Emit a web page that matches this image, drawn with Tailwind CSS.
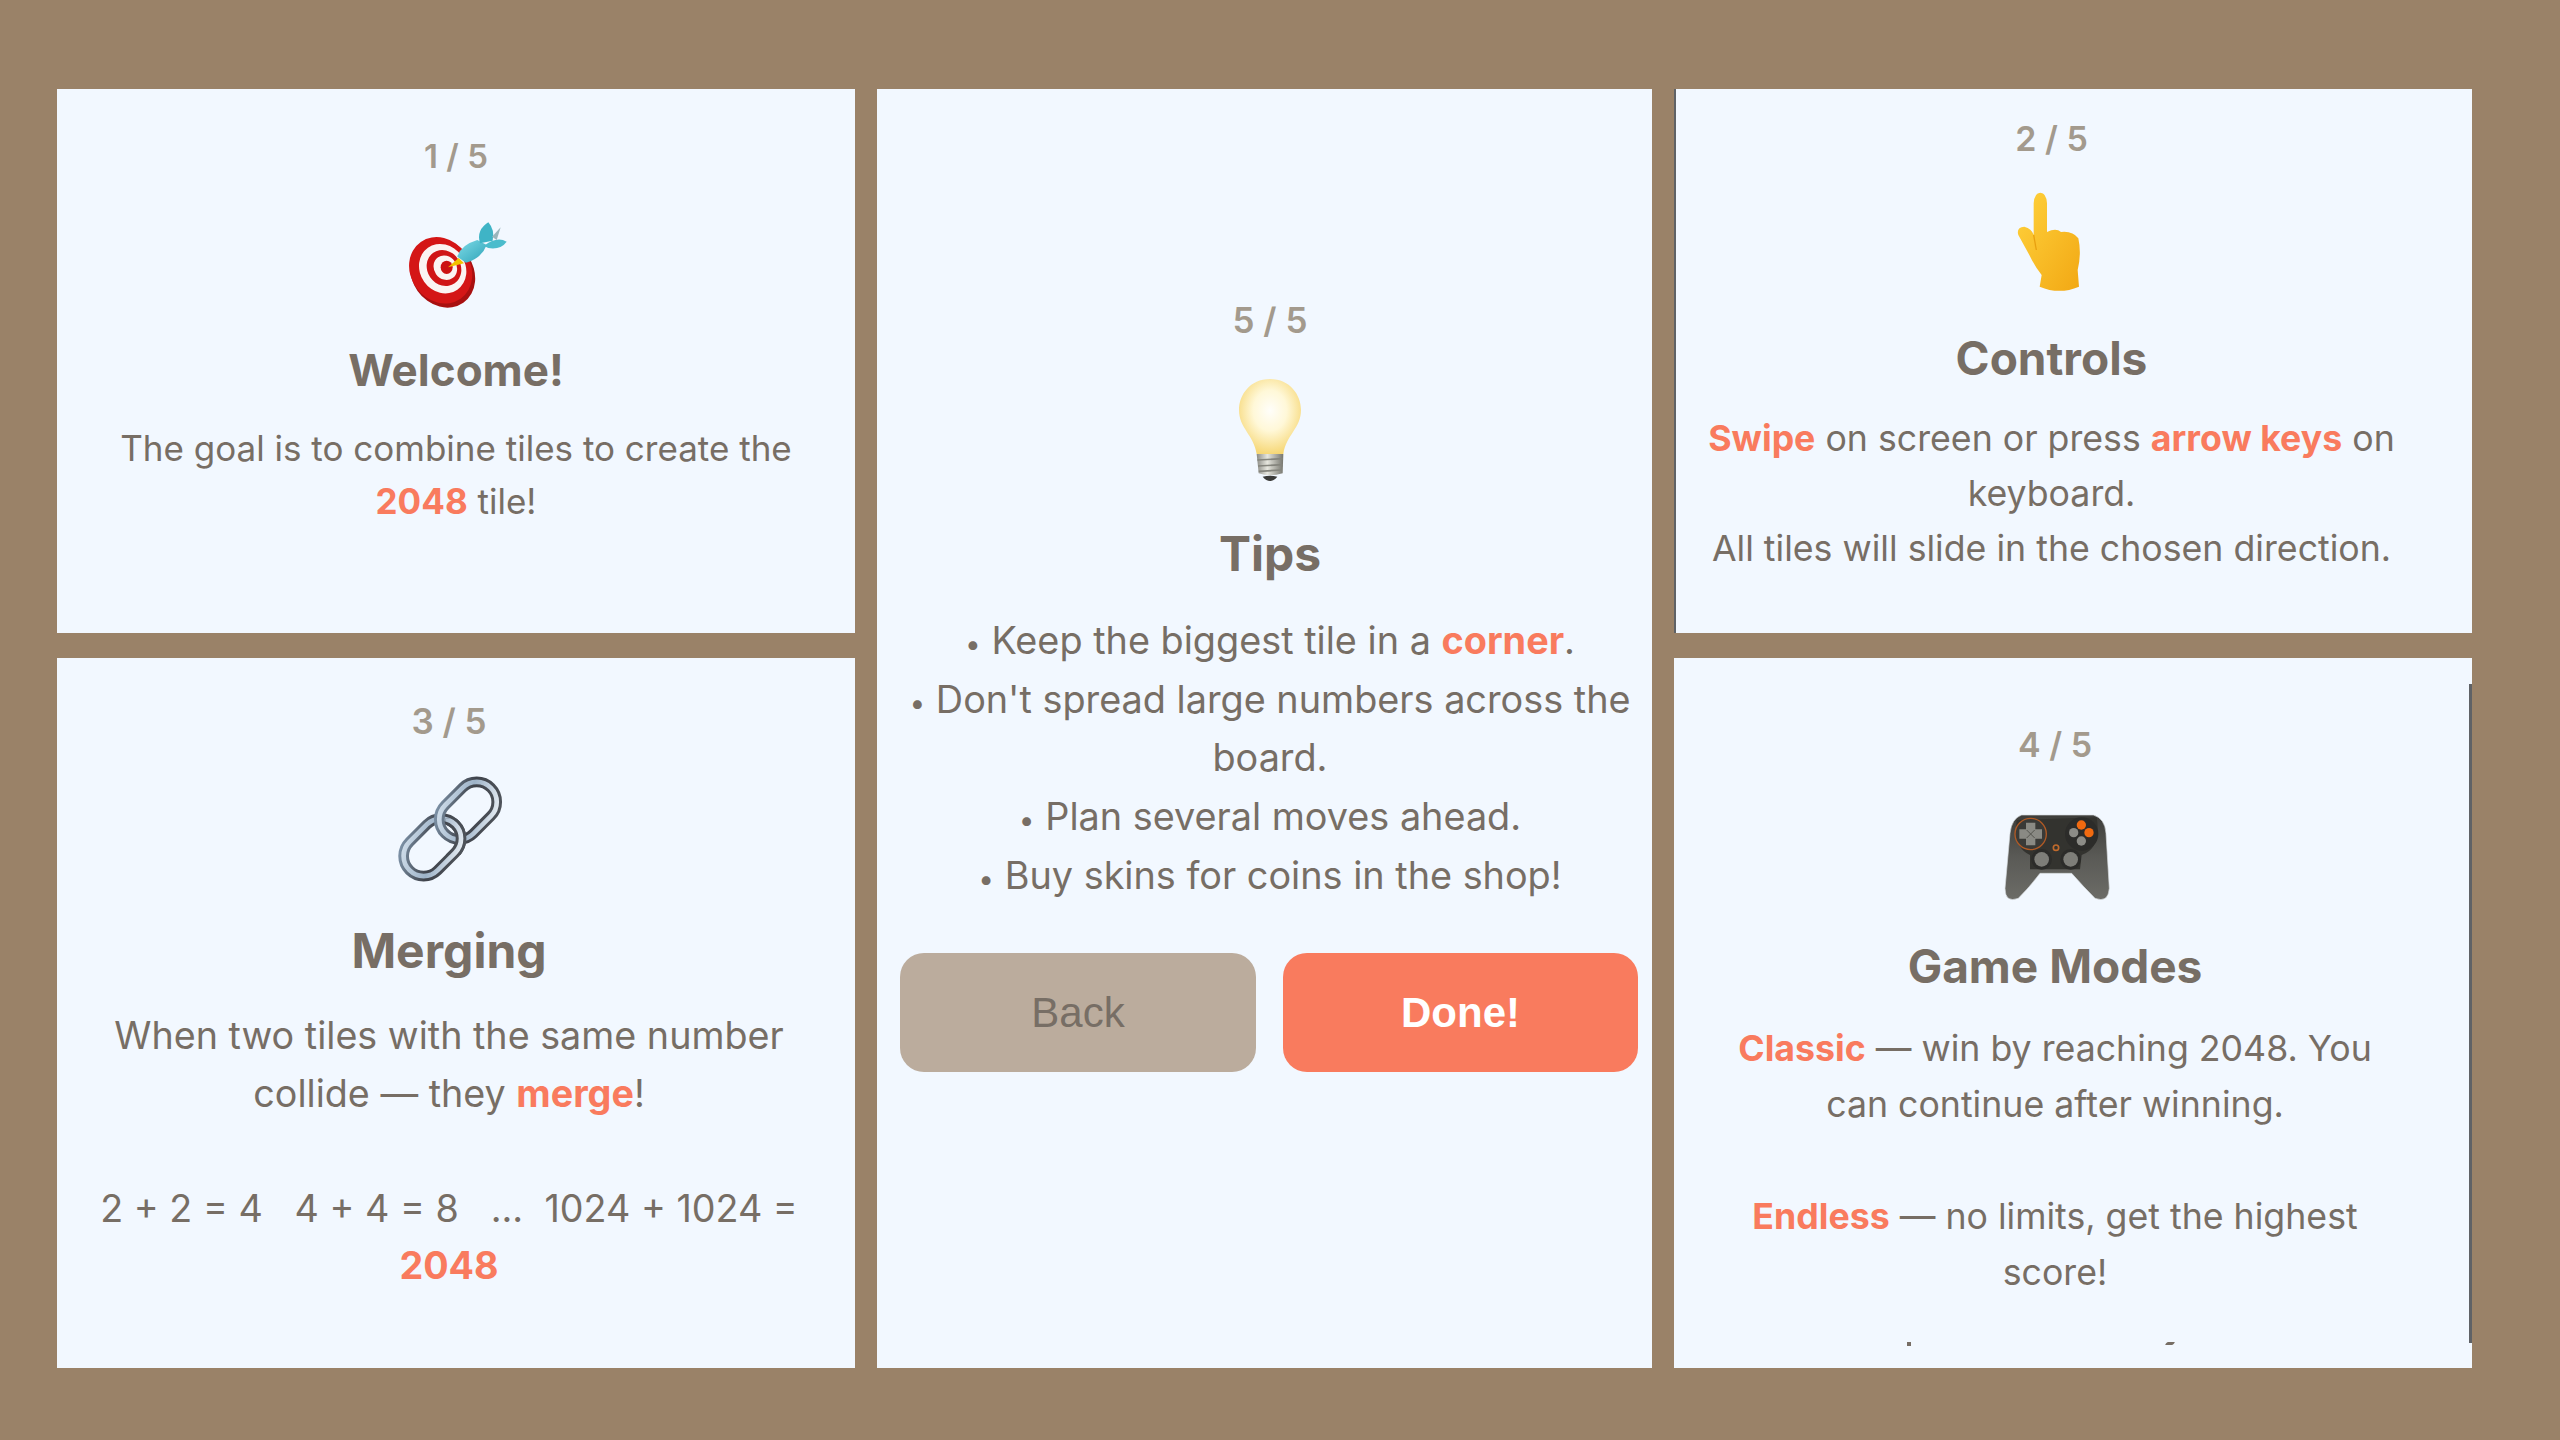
<!DOCTYPE html>
<html><head><meta charset="utf-8"><script src="https://cdn.jsdelivr.net/npm/@tailwindcss/browser@4"></script></head>
<body class="m-0 bg-[#9a8268]">
<div class="relative w-[2560px] h-[1440px] bg-[#9a8268] pt-[89px] pl-[57px] flex gap-[22px] font-['Inter',sans-serif] text-[#776e65] text-center overflow-hidden">
  <div class="w-[798px] flex flex-col gap-[25px]">
    <section class="h-[544px] bg-[#f2f8ff] pt-[47px]">
      <div class="h-[40px] leading-[40px] text-[33px] font-semibold text-[#a39a8d]">1 / 5</div>
      <svg class="block mx-auto mt-[14px] w-[200px] h-[150px]" viewBox="48 0 600 450">
        <defs><linearGradient id="dt" x1="0" y1="0" x2="1" y2="1"><stop offset="0" stop-color="#7fdce8"/><stop offset="1" stop-color="#2ea3b8"/></linearGradient></defs>
        <ellipse cx="308" cy="250" rx="92" ry="108" transform="rotate(-35 308 250)" fill="#a81010"/>
        <ellipse cx="302" cy="241" rx="90" ry="104" transform="rotate(-35 302 241)" fill="#d41616"/>
        <ellipse cx="308" cy="236" rx="68" ry="77" transform="rotate(-35 308 236)" fill="#fbf4f2"/>
        <ellipse cx="312" cy="234" rx="50" ry="56" transform="rotate(-35 312 234)" fill="#d01515"/>
        <ellipse cx="316" cy="233" rx="34" ry="38" transform="rotate(-35 316 233)" fill="#fbf4f2"/>
        <ellipse cx="320" cy="232" rx="18" ry="20" fill="#cc1212"/>
        <path d="M324 232 L356 204 L372 220Z" fill="#f2c200"/>
        <path d="M352 200 Q362 165 412 150 L440 165 Q425 205 378 218Z" fill="url(#dt)"/>
        <path d="M420 160 Q408 120 445 97 Q465 120 458 152Z" fill="#3fb4c6"/>
        <path d="M432 168 Q470 138 500 155 Q482 180 445 174Z" fill="#4bbccc"/>
        <path d="M456 140 L482 112 L470 150Z" fill="#9ab6bc"/>
      </svg>
      <h2 class="mt-[5px] h-[50px] leading-[50px] text-[44px] font-bold">Welcome!</h2>
      <p class="mt-[27px] text-[35px] leading-[53px]">The goal is to combine tiles to create the<br><b class="font-bold text-[#f97b5e]">2048</b> tile!</p>
    </section>
    <section class="h-[710px] bg-[#f2f8ff] pt-[43px] pr-[14px]">
      <div class="h-[40px] leading-[40px] text-[35px] font-semibold text-[#a39a8d]">3 / 5</div>
      <svg class="block mx-auto mt-[9px] w-[170px] h-[150px]" viewBox="-20 0 510 450" fill="none">
        <defs>
          <linearGradient id="cd" x1="0" y1="0" x2="1" y2="1"><stop offset="0" stop-color="#8197ad"/><stop offset=".5" stop-color="#3f434b"/><stop offset="1" stop-color="#50555c"/></linearGradient>
          <linearGradient id="cl" x1="0" y1="0" x2="1" y2="1"><stop offset="0" stop-color="#d5e2ee"/><stop offset=".5" stop-color="#9db2c7"/><stop offset="1" stop-color="#eef3f8"/></linearGradient>
          <clipPath id="over"><rect x="225" y="205" width="90" height="110"/></clipPath>
          <g id="lowerlink"><rect x="88" y="232" width="194" height="120" rx="60" transform="rotate(-45 185 292)" stroke="url(#cd)" stroke-width="32"/><rect x="88" y="232" width="194" height="120" rx="60" transform="rotate(-45 185 292)" stroke="url(#cl)" stroke-width="14"/></g>
        </defs>
        <use href="#lowerlink"/>
        <rect x="195" y="122" width="194" height="120" rx="60" transform="rotate(-45 292 182)" stroke="url(#cd)" stroke-width="32"/>
        <rect x="195" y="122" width="194" height="120" rx="60" transform="rotate(-45 292 182)" stroke="url(#cl)" stroke-width="14"/>
        <g clip-path="url(#over)"><use href="#lowerlink"/></g>
      </svg>
      <h2 class="mt-[26px] h-[50px] leading-[50px] text-[48px] font-bold">Merging</h2>
      <p class="mt-[31px] text-[37.7px] leading-[57.5px]">When two tiles with the same number<br>collide — they <b class="font-bold text-[#f97b5e]">merge</b>!<br><br>2 + 2 = 4 &nbsp; 4 + 4 = 8 &nbsp; ... &nbsp;1024 + 1024 =<br><b class="font-bold text-[#f97b5e]">2048</b></p>
    </section>
  </div>
  <section class="w-[775px] h-[1279px] bg-[#f2f8ff] pt-[211px] pl-[11px]">
    <div class="h-[40px] leading-[40px] text-[35px] font-semibold text-[#a39a8d]">5 / 5</div>
    <svg class="block mx-auto mt-[20px] w-[180px] h-[140px]" viewBox="0 0 540 420">
      <defs><radialGradient id="bl" cx=".5" cy=".42" r=".6"><stop offset="0" stop-color="#fffefa"/><stop offset=".45" stop-color="#fff8d8"/><stop offset="1" stop-color="#f6d672"/></radialGradient>
      <linearGradient id="sc" x1="0" x2="1"><stop offset="0" stop-color="#8c8c86"/><stop offset=".4" stop-color="#e6e6de"/><stop offset="1" stop-color="#77776f"/></linearGradient></defs>
      <path d="M270 57 C210 57 177 105 177 150 C177 205 222 225 230 282 L310 282 C318 225 363 205 363 150 C363 105 330 57 270 57Z" fill="url(#bl)"/>
      <path d="M230 282 L310 282 L308 340 Q270 352 236 340Z" fill="url(#sc)"/>
      <path d="M232 300 L308 296 M234 318 L308 314 M236 334 L306 330" stroke="#85857d" stroke-width="5"/>
      <path d="M248 350 Q270 376 292 350 Q270 344 248 350Z" fill="#3b3b39"/>
    </svg>
    <h2 class="mt-[29px] h-[50px] leading-[50px] text-[48px] font-bold">Tips</h2>
    <p class="mt-[32px] text-[37.8px] leading-[58.7px]"><span class="text-[28px] leading-none">•</span> Keep the biggest tile in a <b class="font-bold text-[#f97b5e]">corner</b>.<br><span class="text-[28px] leading-none">•</span> Don't spread large numbers across the<br>board.<br><span class="text-[28px] leading-none">•</span> Plan several moves ahead.<br><span class="text-[28px] leading-none">•</span> Buy skins for coins in the shop!</p>
  </section>
  <div class="w-[798px] flex flex-col gap-[25px]">
    <section class="h-[544px] bg-[#f2f8ff] pt-[30px] pr-[43px]">
      <div class="h-[40px] leading-[40px] text-[34px] font-semibold text-[#a39a8d]">2 / 5</div>
      <svg class="block mx-auto mt-[11px] w-[180px] h-[150px]" viewBox="3 0 540 450">
        <defs><linearGradient id="hd" x1="0" y1="0" x2="1" y2="1"><stop offset="0" stop-color="#ffd23c"/><stop offset="1" stop-color="#f2a814"/></linearGradient></defs>
        <path d="M218 100 Q220 68 238 68 Q256 68 258 100 L258 186 Q285 172 300 186 Q335 182 352 205 Q362 250 350 300 L354 350 Q295 375 236 350 L242 315 Q222 290 205 255 L172 195 Q165 172 190 170 Q212 175 218 195Z" fill="url(#hd)"/>
        <path d="M218 195 L226 240" stroke="#e8a010" stroke-width="4" fill="none"/>
      </svg>
      <h2 class="mt-[13px] h-[50px] leading-[50px] text-[46px] font-bold">Controls</h2>
      <p class="mt-[28px] text-[35.7px] leading-[55px]"><b class="font-bold text-[#f97b5e]">Swipe</b> on screen or press <b class="font-bold text-[#f97b5e]">arrow keys</b> on<br>keyboard.<br>All tiles will slide in the chosen direction.</p>
    </section>
    <section class="relative h-[710px] bg-[#f2f8ff]">
      <div class="h-[685px] overflow-hidden pt-[67px] pr-[36px]">
        <div class="h-[40px] leading-[40px] text-[34px] font-semibold text-[#a39a8d]">4 / 5</div>
        <svg class="block mx-auto mt-[25px] w-[160px] h-[120px]" viewBox="-15 0 480 360">
          <defs><linearGradient id="pd" x1="0" y1="0" x2="0" y2="1"><stop offset="0" stop-color="#3d3d3a"/><stop offset=".5" stop-color="#5a5a56"/><stop offset="1" stop-color="#6c6c67"/></linearGradient></defs>
          <path d="M125 75 L340 75 Q375 85 378 130 L388 295 Q385 340 345 325 Q310 290 275 250 L180 250 Q150 290 115 325 Q75 340 75 295 L90 130 Q95 85 125 75Z" fill="url(#pd)" stroke="#d8dde0" stroke-width="2"/>
          <path d="M110 90 L350 82 Q365 175 305 195 L300 238 L150 238 L150 195 Q100 175 110 90Z" fill="#33332f"/>
          <circle cx="152" cy="132" r="47" fill="#3a3a37" stroke="#b05a25" stroke-width="4"/>
          <path d="M138 98 h28 v20 h20 v28 h-20 v20 h-28 v-20 h-20 v-28 h20z" fill="#8a8a84"/>
          <path d="M140 120 L164 144 M164 120 L140 144" stroke="#55554f" stroke-width="3"/>
          <circle cx="305" cy="132" r="50" fill="#2c2c2a"/>
          <circle cx="304" cy="105" r="14" fill="#f16a10"/><circle cx="327" cy="128" r="14" fill="#f16a10"/>
          <circle cx="281" cy="128" r="14" fill="#8c8c87"/><circle cx="304" cy="153" r="14" fill="#8c8c87"/>
          <circle cx="228" cy="173" r="8" fill="none" stroke="#c06a2c" stroke-width="5"/>
          <circle cx="185" cy="208" r="31" fill="#2c2c2a"/><circle cx="272" cy="208" r="31" fill="#2c2c2a"/>
          <circle cx="185" cy="208" r="22" fill="#7e7e79"/><circle cx="272" cy="208" r="22" fill="#7e7e79"/>
        </svg>
        <h2 class="mt-[31px] h-[50px] leading-[50px] text-[46px] font-bold">Game Modes</h2>
        <p class="mt-[29px] text-[35.7px] leading-[56px]"><b class="font-bold text-[#f97b5e]">Classic</b> — win by reaching 2048. You<br>can continue after winning.<br><br><b class="font-bold text-[#f97b5e]">Endless</b> — no limits, get the highest<br>score!</p>
      </div>
      <div class="absolute right-0 top-[26px] h-[659px] w-[3px] bg-[#5f6266]"></div>
      <div class="absolute left-[233px] top-[684px] w-[4px] h-[4px] bg-[#776e65]"></div>
      <div class="absolute left-[492px] top-[684px] w-[8px] h-[3px] -skew-x-[40deg] rounded-[1px] bg-[#776e65]"></div>
    </section>
  </div>
  <div class="absolute left-[900px] top-[953px] flex gap-[27px] font-['Liberation_Sans',sans-serif]">
    <button class="w-[356px] h-[119px] rounded-[24px] bg-[#bbac9d] text-[#776e65] text-[42px]">Back</button>
    <button class="w-[355px] h-[119px] rounded-[24px] bg-[#f97b5e] text-white font-bold text-[42px]">Done!</button>
  </div>
  <div class="absolute left-[1674px] top-[89px] w-[2px] h-[544px] bg-[#5f6266]"></div>
</div>
</body></html>
